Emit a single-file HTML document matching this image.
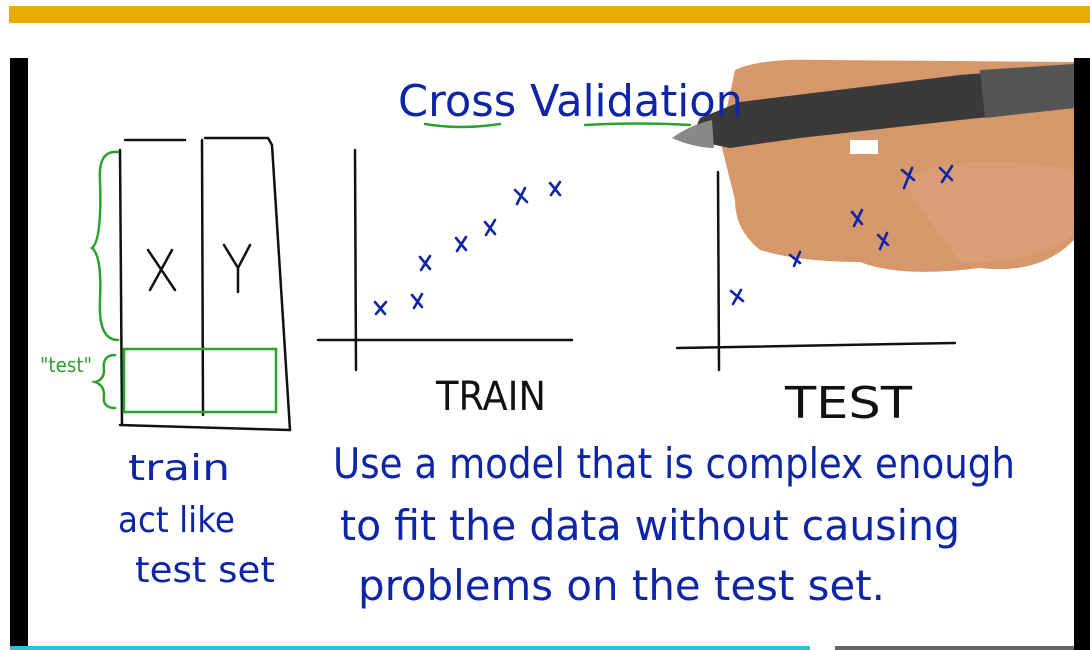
<!DOCTYPE html>
<html><head><meta charset="utf-8"><style>
html,body{margin:0;padding:0;background:#fff;width:1090px;height:650px;overflow:hidden}
</style></head><body>
<svg width="1090" height="650" viewBox="0 0 1090 650" xmlns="http://www.w3.org/2000/svg" style="position:absolute;left:0;top:0">
<rect x="9" y="6" width="1081" height="17" fill="#eaab00"/>
<rect x="10" y="58" width="18" height="592" fill="#000"/>
<rect x="1074" y="58" width="16" height="592" fill="#000"/>
<path d="M735 70 Q760 58 820 60 L1074 62 L1074 240 Q1040 275 980 268 Q900 278 860 262 Q800 262 760 250 Q735 230 735 200 Q725 160 720 140 Z" fill="#d6976a"/>
<path d="M900 180 Q960 150 1074 170 L1074 235 Q1030 265 960 262 Z" fill="#dca07a" opacity="0.7"/>
<path d="M690 140 L700 118 L740 102 L960 75 L1074 66 L1074 108 L960 120 L800 138 L730 148 Z" fill="#3a3a3a"/>
<path d="M980 70 L1074 64 L1074 108 L985 118 Z" fill="#555"/>
<path d="M672 138 Q690 125 712 120 L714 148 Q695 148 672 138 Z" fill="#888"/>
<rect x="850" y="140" width="28" height="14" fill="#fff"/>
<g fill="none" stroke="#111" stroke-width="2.5" stroke-linecap="round">
<path d="M120 150 L122 425"/><path d="M125 140 L185 140"/><path d="M202 140 L203 415"/><path d="M205 138 L268 138 L272 145 L290 430"/><path d="M120 425 L290 430"/>
<path d="M355 150 L356 370"/><path d="M318 340 L572 340"/>
<path d="M718 172 L719 370"/><path d="M677 348 L955 343"/>
<path d="M148 250 L175 290 M172 250 L150 290"/><path d="M224 245 L238 268 L250 245 M238 268 L238 292"/>
</g>
<g fill="none" stroke="#2ca02c" stroke-width="2.5" stroke-linecap="round">
<rect x="124" y="349" width="152" height="63"/>
<path d="M118 152 Q98 150 100 180 Q102 240 92 248 Q102 256 100 300 Q98 340 118 340"/>
<path d="M115 355 Q102 355 104 370 Q104 380 95 382 Q104 385 104 395 Q102 408 115 408"/>
<path d="M425 124 Q460 130 500 124"/><path d="M585 125 Q640 122 690 125"/>
</g>
<g fill="none" stroke="#0f25a8" stroke-width="2.6" stroke-linecap="round">
<path d="M375 302l10 12M386 302l-10 12M412 295l10 12M422 294l-8 14M420 257l10 12M430 256l-9 14M456 238l10 12M466 237l-9 14M485 222l10 12M495 220l-9 15M515 190l12 12M525 188l-8 16M550 183l10 12M560 182l-9 13"/>
<path d="M731 291l12 10M741 290l-8 14M790 255l10 8M800 252l-6 14M852 212l10 12M862 210l-8 16M878 235l10 10M887 233l-7 16M902 170l12 10M912 168l-8 20M940 168l12 12M952 166l-10 16"/>
</g>
<g font-family="'DejaVu Sans', sans-serif" fill="#0f25a8">
<text x="398" y="116" font-size="44" textLength="345" lengthAdjust="spacingAndGlyphs">Cross Validation</text>
<text x="436" y="410" font-size="40" fill="#111" textLength="110" lengthAdjust="spacingAndGlyphs">TRAIN</text>
<text x="785" y="418" font-size="44" fill="#111" textLength="127" lengthAdjust="spacingAndGlyphs">TEST</text>
<text x="128" y="480" font-size="36" textLength="102" lengthAdjust="spacingAndGlyphs">train</text>
<text x="118" y="532" font-size="36" textLength="117" lengthAdjust="spacingAndGlyphs">act like</text>
<text x="135" y="582" font-size="36" textLength="140" lengthAdjust="spacingAndGlyphs">test set</text>
<text x="333" y="478" font-size="42" textLength="682" lengthAdjust="spacingAndGlyphs">Use a model that is complex enough</text>
<text x="340" y="540" font-size="42" textLength="620" lengthAdjust="spacingAndGlyphs">to fit the data without causing</text>
<text x="358" y="600" font-size="42" textLength="527" lengthAdjust="spacingAndGlyphs">problems on the test set.</text>
<text x="40" y="372" font-size="20" fill="#2ca02c" textLength="52" lengthAdjust="spacingAndGlyphs">"test"</text>
</g>
<rect x="10" y="646" width="800" height="4" fill="#22c4e0"/>
<rect x="835" y="646" width="239" height="4" fill="#666"/>
</svg>
</body></html>
